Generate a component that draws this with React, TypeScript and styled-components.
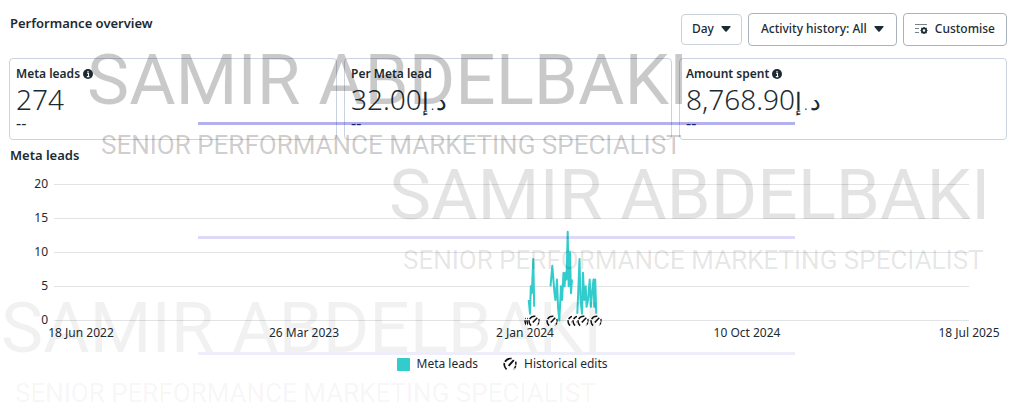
import React from 'react';
import styled, { createGlobalStyle } from 'styled-components';

const UI_FONT = '"Noto Sans", "Open Sans", sans-serif';

const GlobalStyle = createGlobalStyle`
  * { box-sizing: border-box; }
  body { margin: 0; background: #fff; color: #1c2b33; font-family: ${UI_FONT}; font-size: 12px; line-height: 16px; }
  h1, h2, h3, p { margin: 0; }
`;

const Page = styled.main`
  position: relative;
  min-height: 413px;
  padding: 13px 8px 0 9px;
  overflow: hidden;
`;

const Header = styled.header`
  display: flex;
  justify-content: space-between;
  align-items: flex-start;
  height: 45px;
`;

const Title = styled.h2`
  padding-left: 1px;
  font-size: 13px;
  line-height: 20px;
  font-weight: 600;
`;

const Toolbar = styled.div`
  display: flex;
  align-items: center;
  gap: 6px;
`;

const ToolButton = styled.button<{ $small?: boolean; $pad: number }>`
  display: inline-flex;
  align-items: center;
  justify-content: center;
  gap: 7px;
  height: ${(p) => (p.$small ? 31 : 33)}px;
  padding: 0 ${(p) => p.$pad}px 2px;
  border: 1px solid ${(p) => (p.$small ? '#cbd2d9' : '#a9b3bd')};
  border-radius: 4px;
  background: #fff;
  color: #1c2b33;
  font: 500 12px/16px ${UI_FONT};
`;

const Cards = styled.section`
  display: grid;
  grid-template-columns: repeat(3, 1fr);
  gap: 7px;
`;

const Card = styled.article`
  height: 82px;
  padding: 7px 6px;
  border: 1px solid #cbd2e0;
  border-radius: 4px;
`;

const CardTitle = styled.h3`
  display: flex;
  align-items: center;
  gap: 3px;
  font-size: 12px;
  line-height: 16px;
  font-weight: 600;
`;

const Value = styled.p`
  font-size: 28px;
  line-height: 34px;
  font-weight: 300;
`;

const Currency = styled.bdi`
  font-family: "DejaVu Sans", sans-serif;
  font-size: 24px;
  line-height: 24px;
  font-weight: 200;
`;

const Trend = styled.p`
  font-size: 16px;
  line-height: 14px;
`;

const Chart = styled.section`
  padding-top: 5px;
`;

const ChartBody = styled.div`
  display: grid;
  grid-template-columns: 39px 1fr;
  column-gap: 6px;
  padding: 11px 38px 0 0;
`;

const YAxis = styled.div`
  display: flex;
  flex-direction: column;
  justify-content: space-between;
  height: 152px;
  text-align: right;
`;

const Plot = styled.div`
  position: relative;
  margin: 8px 0;
`;

const Drawing = styled.svg`
  display: block;
  width: 100%;
  height: 137px;
  overflow: visible;
`;

const Pin = styled.span`
  position: absolute;
  bottom: -6px;
  display: flex;
  width: 12px;
  height: 12px;
  background: #fff;
`;

const XAxis = styled.div`
  display: flex;
  justify-content: space-between;
  padding: 0 4px 0 38px;
  margin-top: -4px;
  span { width: 68px; text-align: center; white-space: nowrap; }
`;

const Legend = styled.div`
  display: flex;
  justify-content: center;
  gap: 25px;
  padding: 15px 12px 0 0;
`;

const LegendItem = styled.span`
  display: inline-flex;
  align-items: center;
  gap: 7px;
`;

const Swatch = styled.i`
  width: 13px;
  height: 13px;
  border-radius: 1px;
  background: #31cccb;
`;

const Watermark = styled.div<{ $top: number; $left: number; $ink: number }>`
  position: absolute;
  top: ${(p) => p.$top}px;
  left: ${(p) => p.$left}px;
  color: rgba(0, 0, 0, ${(p) => p.$ink});
  font-family: Roboto, sans-serif;
  white-space: nowrap;
  pointer-events: none;
`;

const MarkName = styled.p`
  font-size: 71px;
  line-height: 70px;
`;

const MarkRole = styled.p`
  padding: 15px 0 0 14px;
  font-size: 26px;
  line-height: 30px;
`;

const MarkRule = styled.i<{ $top: number; $ink: number }>`
  position: absolute;
  top: ${(p) => p.$top}px;
  left: 198px;
  width: 597px;
  height: 3px;
  background: rgba(20, 10, 205, ${(p) => p.$ink});
  pointer-events: none;
`;

const Caret = () => (
  <svg width="10" height="6" viewBox="0 0 10 6" aria-hidden="true">
    <path d="M1 0h8q1 0 .5 1L5.7 5.5q-.7.6-1.4 0L.5 1Q0 0 1 0z" fill="#1c2b33" />
  </svg>
);

const Info = () => (
  <svg width="10" height="10" viewBox="0 0 10 10" aria-hidden="true">
    <circle cx="5" cy="5" r="5" fill="#1c2b33" />
    <path d="M4 4.3h1.5V7.6M3.8 7.6h2.6M5 2v1.2" stroke="#fff" strokeWidth="1.1" fill="none" />
  </svg>
);

const CustomiseIcon = () => (
  <svg width="13" height="12" viewBox="0 0 13 12" aria-hidden="true">
    <path d="M0 1.5h12M0 5.5h4M0 9.5h4" stroke="#77828a" strokeWidth="1.2" fill="none" />
    <circle cx="9" cy="7.5" r="2.2" stroke="#1c2b33" strokeWidth="1.8" fill="none" />
    <path d="M9 4v1M9 10v1M5.5 7.5h1M11.5 7.5h1M6.4 4.9l.8.8M10.8 9.3l.8.8M11.6 4.9l-.8.8M7.2 9.3l-.8.8" stroke="#1c2b33" strokeWidth="1.2" />
  </svg>
);

const EditIcon = ({ size = 14 }: { size?: number }) => (
  <svg width={size} height={size} viewBox="0 0 14 14" aria-hidden="true">
    <path d="M3.6 12.4Q.6 9.5 1.4 6" stroke="#111" strokeWidth="1.7" fill="none" />
    <path d="M1.9 4.8Q4 1.2 8.6 1.5" stroke="#111" strokeWidth="1.7" fill="none" />
    <path d="M5.6 8.8L10.8 3.2" stroke="#111" strokeWidth="1.9" fill="none" />
    <path d="M12.7 4.6Q13.6 9.5 10.6 12.4" stroke="#111" strokeWidth="1.5" strokeDasharray="3 1" fill="none" />
  </svg>
);

const metrics = [
  { name: 'Meta leads', value: '274', info: true },
  { name: 'Per Meta lead', value: '32.00', currency: true },
  { name: 'Amount spent', value: '8,768.90', currency: true, info: true },
];

// Each run is a list of [x, leads] pairs on a 915-unit wide time axis.
const runs: [number, number][][] = [
  [[474.7, 3], [476, 1], [476.8, 5], [477.8, 4], [479.3, 9], [480.2, 2]],
  [[496.5, 5], [498.3, 8], [500.5, 4], [501.5, 3], [503, 6], [504, 2], [505.3, 0], [507, 5], [508, 3], [509.5, 7], [510.5, 5], [511.5, 7], [512.5, 6], [513.7, 13], [514.7, 5], [516, 10], [517, 4], [518, 6]],
  [[523.3, 1], [524.2, 4], [525.5, 9], [526.5, 3], [528, 1], [529, 7], [530.3, 3], [531.7, 5], [532.6, 2], [534, 3], [535.7, 6], [536.8, 2], [538, 4], [539.5, 6], [540.3, 2], [541.2, 6], [542.3, 1]],
];

const pins = [470, 472, 474, 492, 513, 518, 523, 536];
const days = ['18 Jun 2022', '26 Mar 2023', '2 Jan 2024', '10 Oct 2024', '18 Jul 2025'];
const marks = [
  { top: 45, left: 87, rule: 122, text: 0.21, line: 0.32 },
  { top: 160, left: 389, rule: 236, text: 0.11, line: 0.15 },
  { top: 293, left: 1, rule: 352, text: 0.055, line: 0.07 },
];

export default function App() {
  return (
    <Page>
      <GlobalStyle />
      <Header>
        <Title>Performance overview</Title>
        <Toolbar>
          <ToolButton $small $pad={10}>Day <Caret /></ToolButton>
          <ToolButton $pad={12}>Activity history: All <Caret /></ToolButton>
          <ToolButton $pad={11}><CustomiseIcon /> Customise</ToolButton>
        </Toolbar>
      </Header>
      <Cards>
        {metrics.map((m) => (
          <Card key={m.name}>
            <CardTitle>{m.name}{m.info && <Info />}</CardTitle>
            <Value>{m.value}{m.currency && <Currency>د.إ</Currency>}</Value>
            <Trend>--</Trend>
          </Card>
        ))}
      </Cards>
      <Chart>
        <Title>Meta leads</Title>
        <ChartBody>
          <YAxis>{[20, 15, 10, 5, 0].map((n) => <span key={n}>{n}</span>)}</YAxis>
          <Plot>
            <Drawing viewBox="0 0 915 137" preserveAspectRatio="none" role="img" aria-label="Meta leads by day">
              {[0, 1, 2, 3, 4].map((i) => (
                <path key={i} d={`M0 ${i * 34 + 0.5}H915`} stroke="#e1e3e5" />
              ))}
              {runs.map((r, i) => (
                <polyline key={i} points={r.map(([x, v]) => `${x},${136.5 - v * 6.83}`).join(' ')} fill="none" stroke="#31cccb" strokeWidth="2" strokeLinejoin="round" vectorEffect="non-scaling-stroke" />
              ))}
            </Drawing>
            {pins.map((x) => (
              <Pin key={x} style={{ left: `${(x / 915) * 100}%` }}><EditIcon size={12} /></Pin>
            ))}
          </Plot>
        </ChartBody>
        <XAxis>{days.map((d) => <span key={d}>{d}</span>)}</XAxis>
        <Legend>
          <LegendItem><Swatch />Meta leads</LegendItem>
          <LegendItem><EditIcon />Historical edits</LegendItem>
        </Legend>
      </Chart>
      {marks.map((m) => (
        <React.Fragment key={m.top}>
          <Watermark $top={m.top} $left={m.left} $ink={m.text}>
            <MarkName>SAMIR ABDELBAKI</MarkName>
            <MarkRole>SENIOR PERFORMANCE MARKETING SPECIALIST</MarkRole>
          </Watermark>
          <MarkRule $top={m.rule} $ink={m.line} />
        </React.Fragment>
      ))}
    </Page>
  );
}
